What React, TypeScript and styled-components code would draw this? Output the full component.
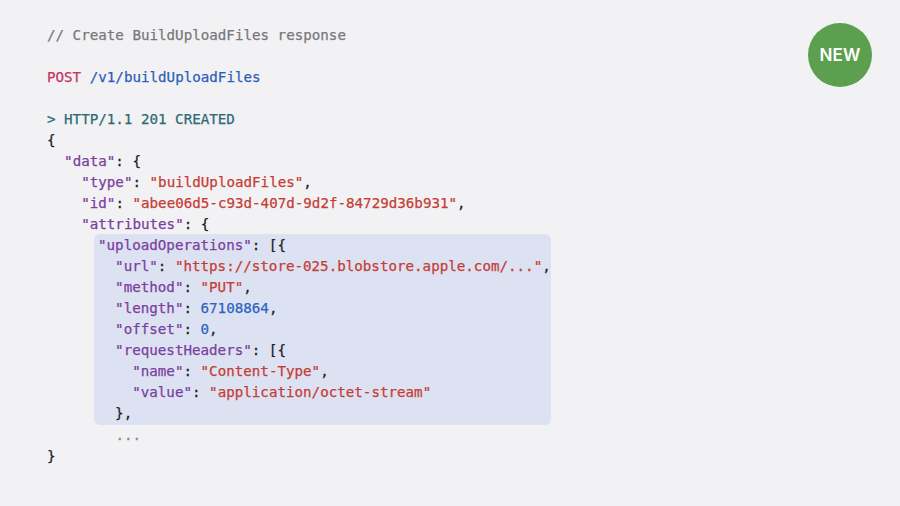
import React from "react";
import styled, { createGlobalStyle } from "styled-components";

const Global = createGlobalStyle`
  html, body { margin: 0; padding: 0; background: #f2f2f4; }
  body { width: 900px; height: 506px; overflow: hidden; }
`;

const Slide = styled.div`
  position: relative;
  width: 900px;
  height: 506px;
  box-sizing: border-box;
  padding: 25px 0 0 47px;
  background: #f2f2f4;
`;

const Code = styled.div`
  font-family: "DejaVu Sans Mono", "Liberation Mono", monospace;
  font-size: 14.2px;
  line-height: 21px;
  color: #1c1c1e;
  white-space: pre;
  -webkit-text-stroke: 0.25px currentColor;
`;

const Line = styled.div<{ $indent?: number }>`
  height: 21px;
  padding-left: ${(p) => (p.$indent ?? 0) * 8.55}px;
`;

const Highlight = styled.div`
  margin: -1px 0 0 47px;
  width: 457px;
  padding: 1px 0 1px 4px;
  box-sizing: border-box;
  background: #dde2f3;
  border-radius: 6px;
`;

const Comment = styled.span`color: #78787c;`;
const Method = styled.span`color: #c2385f;`;
const Path = styled.span`color: #2f5fb5;`;
const Status = styled.span`color: #2c6b75;`;
const Key = styled.span`color: #7b3f9e;`;
const Str = styled.span`color: #c53d35;`;
const Num = styled.span`color: #2e63c0;`;
const Dots = styled.span`color: #8a8a8e;`;

const Badge = styled.div`
  position: absolute;
  left: 808px;
  top: 23px;
  width: 64px;
  height: 64px;
  border-radius: 50%;
  background: #5b9f4f;
  color: #ffffff;
  display: flex;
  align-items: center;
  justify-content: center;
  font-family: Inter, "Noto Sans", sans-serif;
  font-weight: 600;
  font-size: 17px;
  letter-spacing: 0.2px;
`;

const K = ({ k }: { k: string }) => <Key>"{k}"</Key>;
const S = ({ s }: { s: string }) => <Str>"{s}"</Str>;

export default function App() {
  return (
    <Slide>
      <Global />
      <Code>
        <Line><Comment>// Create BuildUploadFiles response</Comment></Line>
        <Line />
        <Line><Method>POST</Method> <Path>/v1/buildUploadFiles</Path></Line>
        <Line />
        <Line><Status>&gt; HTTP/1.1 201 CREATED</Status></Line>
        <Line>{"{"}</Line>
        <Line $indent={2}><K k="data" />: {"{"}</Line>
        <Line $indent={4}><K k="type" />: <S s="buildUploadFiles" />,</Line>
        <Line $indent={4}><K k="id" />: <S s="abee06d5-c93d-407d-9d2f-84729d36b931" />,</Line>
        <Line $indent={4}><K k="attributes" />: {"{"}</Line>
        <Highlight>
          <Line><K k="uploadOperations" />: [{"{"}</Line>
          <Line $indent={2}><K k="url" />: <S s="https://store-025.blobstore.apple.com/..." />,</Line>
          <Line $indent={2}><K k="method" />: <S s="PUT" />,</Line>
          <Line $indent={2}><K k="length" />: <Num>67108864</Num>,</Line>
          <Line $indent={2}><K k="offset" />: <Num>0</Num>,</Line>
          <Line $indent={2}><K k="requestHeaders" />: [{"{"}</Line>
          <Line $indent={4}><K k="name" />: <S s="Content-Type" />,</Line>
          <Line $indent={4}><K k="value" />: <S s="application/octet-stream" /></Line>
          <Line $indent={2}>{"},"}</Line>
        </Highlight>
        <Line $indent={8}><Dots>...</Dots></Line>
        <Line>{"}"}</Line>
      </Code>
      <Badge>NEW</Badge>
    </Slide>
  );
}
